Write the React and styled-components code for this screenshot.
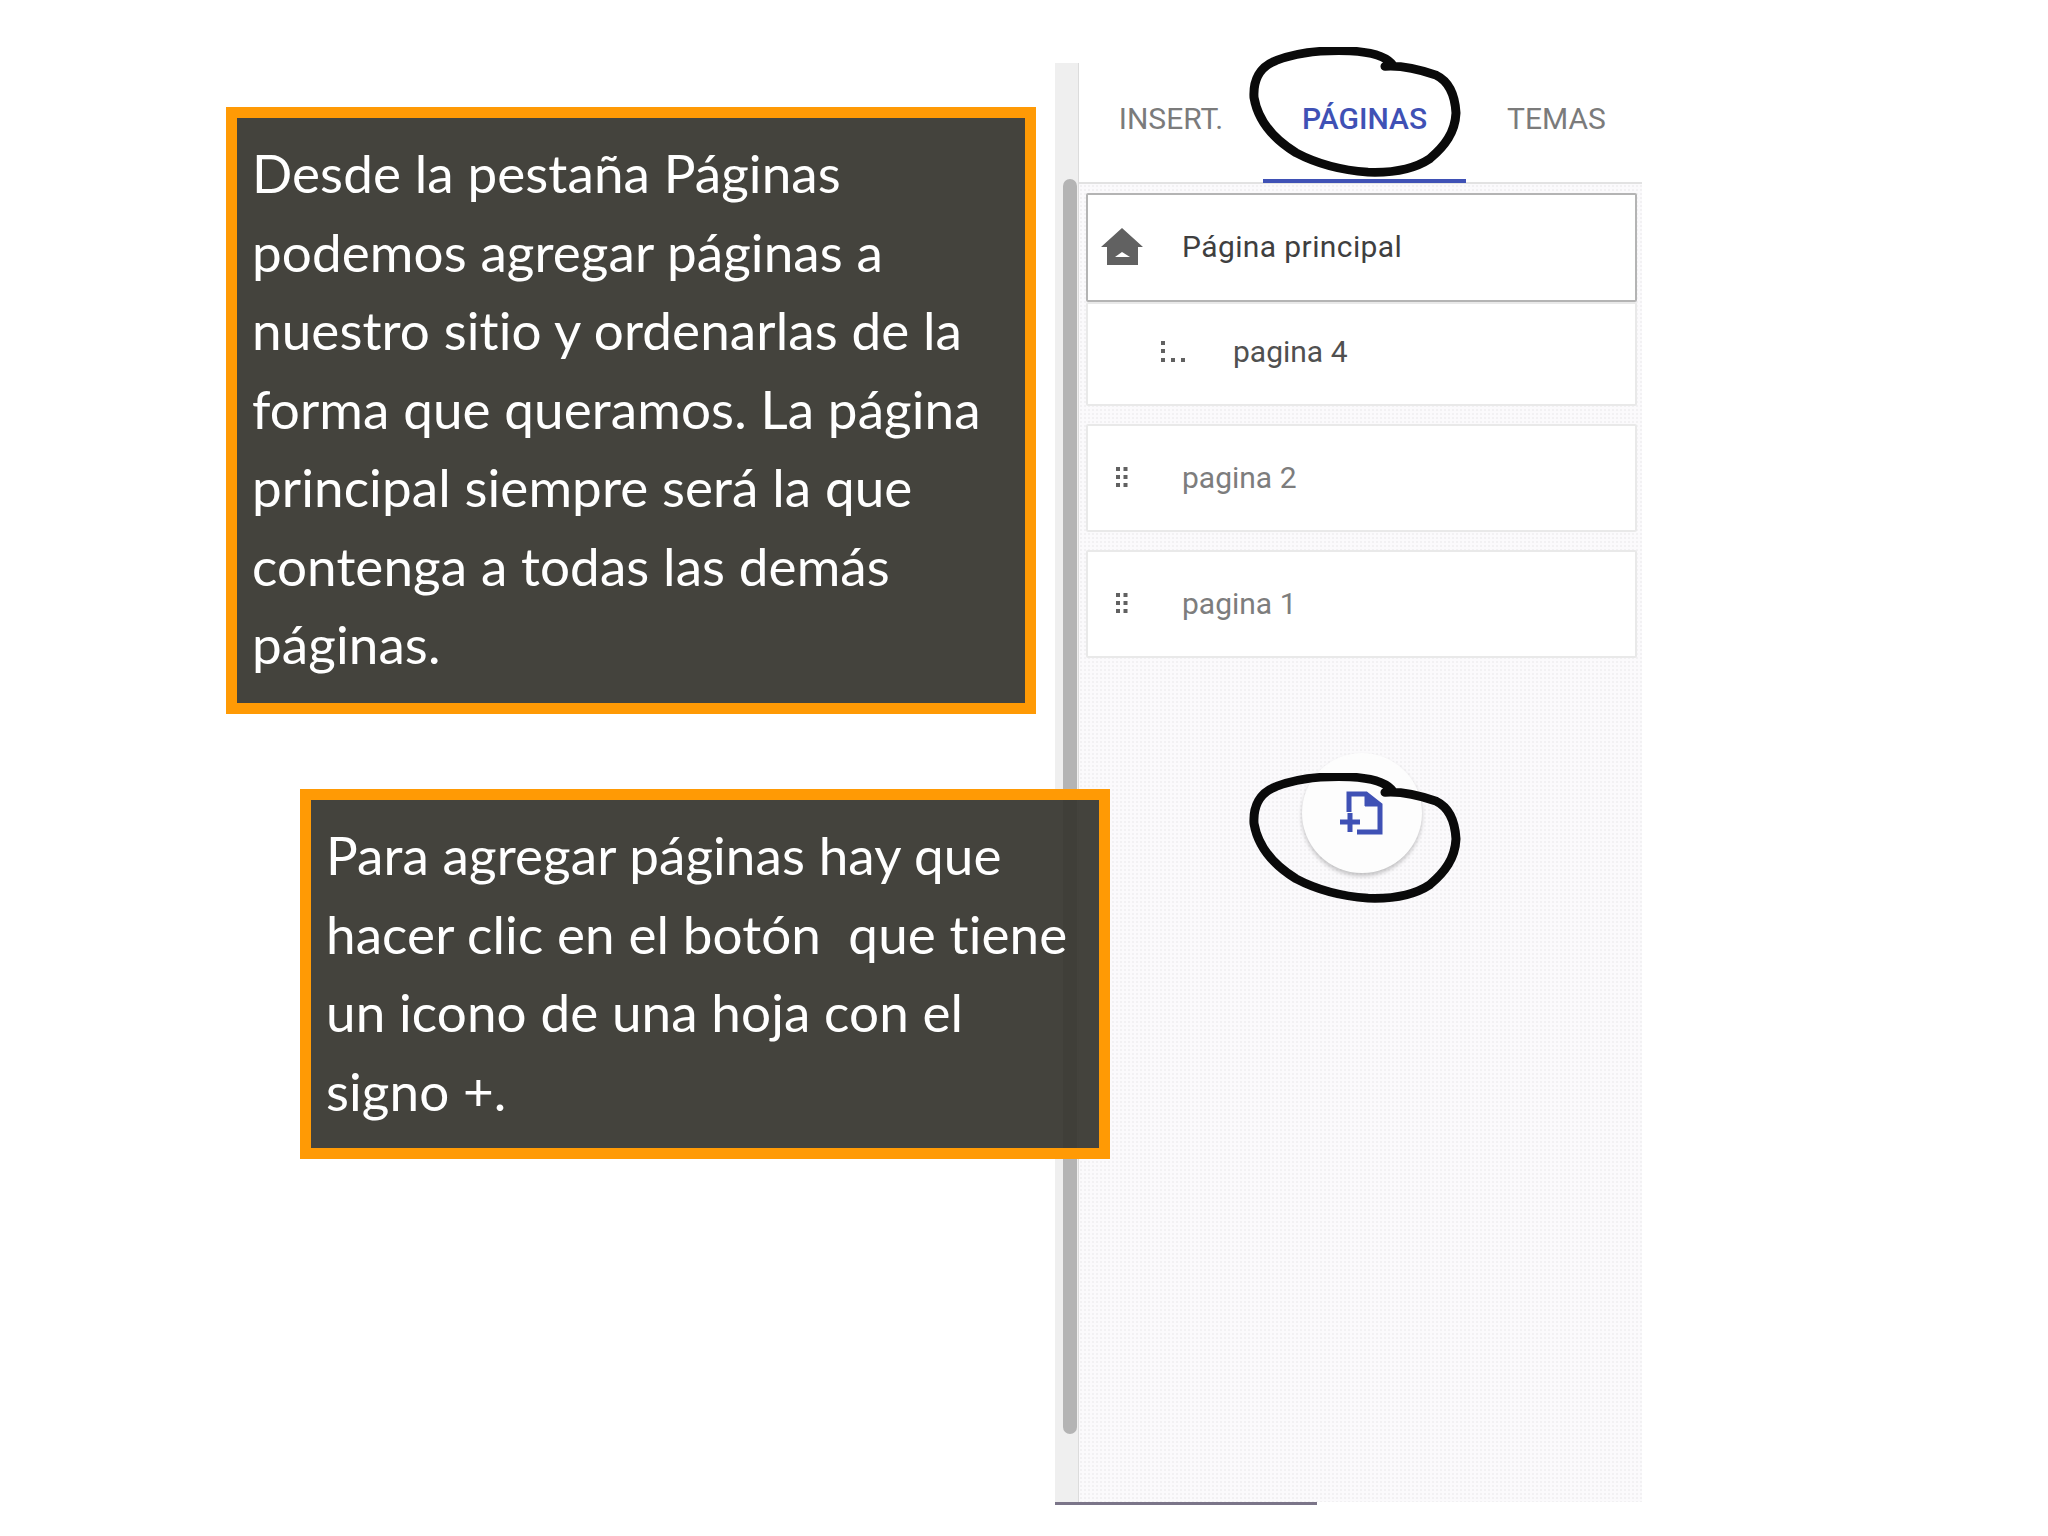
import React from "react";
import styled, { createGlobalStyle } from "styled-components";

const GlobalStyle = createGlobalStyle`
  html, body {
    margin: 0;
    padding: 0;
    background: #fff;
  }
`;

const Page = styled.div`
  position: relative;
  display: flex;
  width: 2048px;
  height: 1536px;
  overflow: hidden;
  background: #fff;
`;

const NotesColumn = styled.div`
  width: 1055px;
  flex: none;
  padding-top: 107px;
  box-sizing: border-box;
`;

const Note = styled.div`
  position: relative;
  z-index: 2;
  box-sizing: border-box;
  width: 810px;
  height: ${(p) => p.$height}px;
  margin-top: ${(p) => p.$top}px;
  margin-left: ${(p) => p.$left}px;
  padding: 16px 10px 0 15px;
  border: 11.5px solid #ff9a05;
  background: rgba(58, 57, 51, 0.95);
  color: #fff;
  font-family: Lato, "Liberation Sans", sans-serif;
  font-size: 53px;
  letter-spacing: 0.1px;
  line-height: 78.5px;
  white-space: pre;
`;

const PanelWrap = styled.div`
  width: 587px;
  flex: none;
  padding-top: 63px;
`;

const Panel = styled.div`
  display: flex;
  height: 1439px;
`;

const Rail = styled.div`
  width: 24px;
  flex: none;
  box-sizing: border-box;
  padding: 116px 1px 68px 8px;
  background: #efefef;
  border-right: 1px solid #dcdcdc;
`;

const Thumb = styled.div`
  height: 100%;
  border-radius: 7px;
  background: #b4b4b4;
`;

const Sidebar = styled.div`
  flex: 1;
  display: flex;
  flex-direction: column;
  min-width: 0;
`;

const Tabs = styled.div`
  display: flex;
  height: 121px;
  flex: none;
  box-sizing: border-box;
  background: #fff;
  border-bottom: 2px solid #e2e2e2;
`;

const Tab = styled.div`
  width: ${(p) => p.$width}px;
  flex: none;
  display: flex;
  align-items: center;
  justify-content: center;
  box-sizing: border-box;
  padding-bottom: 6px;
  padding-left: ${(p) => p.$nudge || 0}px;
  border-bottom: 4px solid ${(p) => (p.$active ? "#3f51b5" : "transparent")};
  margin-bottom: -1px;
  color: ${(p) => (p.$active ? "#3f51b5" : "#7b7b7b")};
  font-family: Roboto, sans-serif;
  font-size: 30px;
  font-weight: ${(p) => (p.$active ? 500 : 400)};
`;

const Content = styled.div`
  flex: 1;
  display: flex;
  flex-direction: column;
  padding: 9px 5px 0 7px;
  background-color: #fbfafc;
  background-image: radial-gradient(#f2f1f3 1px, transparent 1.2px);
  background-size: 4px 4px;
`;

const PageGroup = styled.div`
  display: flex;
  flex-direction: column;
  margin-bottom: 18px;
`;

const PageCard = styled.div`
  display: flex;
  align-items: center;
  box-sizing: border-box;
  height: ${(p) => p.$height}px;
  padding-left: ${(p) => p.$indent || 0}px;
  padding-bottom: ${(p) => p.$lift || 0}px;
  background: #fff;
  border: ${(p) => (p.$selected ? "2px solid #b4b4b4" : "2px solid #e9e9e9")};
  border-radius: 2px;
  color: ${(p) => p.$color};
  font-family: Roboto, sans-serif;
  font-size: 30px;
  letter-spacing: ${(p) => (p.$selected ? "0.4px" : "0")};
`;

const IconSlot = styled.div`
  width: 67px;
  margin-right: 27px;
  flex: none;
  display: flex;
  justify-content: center;
  align-items: center;
`;

const AddButton = styled.div`
  align-self: center;
  width: 120px;
  height: 120px;
  margin-top: 77px;
  display: flex;
  align-items: center;
  justify-content: center;
  border-radius: 50%;
  background: #fdfdfd;
  box-shadow: 0 3px 4px rgba(0, 0, 0, 0.22);
`;

const BottomLine = styled.div`
  width: 262px;
  height: 3px;
  background: #7b7589;
`;

const Scribble = styled.svg`
  position: absolute;
  z-index: 3;
  left: 1246px;
  top: ${(p) => p.$top}px;
  width: 216px;
  height: 130px;
`;

function HomeIcon() {
  return (
    <svg width="44" height="42" viewBox="0 0 44 42">
      <path d="M22 2 43 21H38V39H7V21H1Z" fill="#616161" />
      <path d="M15 31 22 26 30 31Z" fill="#fff" />
    </svg>
  );
}

function DragDots() {
  const dots = [];
  for (let row = 0; row < 3; row++) {
    for (let col = 0; col < 2; col++) {
      dots.push(<rect key={`${row}-${col}`} x={col * 7.5} y={row * 8} width="4" height="4" />);
    }
  }
  return (
    <svg width="12" height="20" viewBox="0 0 12 20" fill="#616161">
      {dots}
    </svg>
  );
}

function BrokenDots() {
  return (
    <svg width="24" height="21" viewBox="0 0 24 21" fill="#616161">
      <rect x="0" y="0" width="4" height="4" />
      <rect x="0" y="8" width="4" height="4" />
      <rect x="0" y="17" width="4" height="4" />
      <rect x="10" y="17" width="4" height="4" />
      <rect x="20" y="17" width="4" height="4" />
    </svg>
  );
}

function AddPageIcon() {
  return (
    <svg width="44" height="44" viewBox="1 1 44 44" fill="none" stroke="#3f51b5" strokeWidth="5">
      <path d="M10 22V4H27L41 15V42H18" />
      <path d="M26 3 41 16H26Z" fill="#3f51b5" strokeWidth="1" />
      <path d="M1 32H21M11 23V42" />
    </svg>
  );
}

function Circle({ top }) {
  return (
    <Scribble $top={top} viewBox="0 0 216 134" preserveAspectRatio="none">
      <path
        d="M139 20C152 19 170 22 190 29C204 36 209 50 210 68C209 88 199 102 184 115C168 126 148 130 122 129C95 127 72 121 50 109C28 95 12 76 8 52C7 34 14 20 30 14C52 5 78 3 104 4C122 5 140 8 147 19"
        fill="none"
        stroke="#0a0a0a"
        strokeWidth="9"
        strokeLinecap="round"
      />
    </Scribble>
  );
}

export default function App() {
  return (
    <Page>
      <GlobalStyle />
      <NotesColumn>
        <Note $height={607} $top={0} $left={226}>
          {`Desde la pestaña Páginas
podemos agregar páginas a
nuestro sitio y ordenarlas de la
forma que queramos. La página
principal siempre será la que
contenga a todas las demás
páginas.`}
        </Note>
        <Note $height={370} $top={75} $left={300}>
          {`Para agregar páginas hay que
hacer clic en el botón  que tiene
un icono de una hoja con el
signo +.`}
        </Note>
      </NotesColumn>
      <PanelWrap>
        <Panel>
          <Rail>
            <Thumb />
          </Rail>
          <Sidebar>
            <Tabs>
              <Tab $width={184}>INSERT.</Tab>
              <Tab $width={203} $active>
                PÁGINAS
              </Tab>
              <Tab $width={176} $nudge={5}>
                TEMAS
              </Tab>
            </Tabs>
            <Content>
              <PageGroup>
                <PageCard $height={109} $selected $color="#3f3f3f" $lift={2}>
                  <IconSlot>
                    <HomeIcon />
                  </IconSlot>
                  Página principal
                </PageCard>
                <PageCard $height={104} $indent={51} $color="#505050" $lift={5}>
                  <IconSlot>
                    <BrokenDots />
                  </IconSlot>
                  pagina 4
                </PageCard>
              </PageGroup>
              <PageGroup>
                <PageCard $height={108} $color="#7d7d7d" $lift={2}>
                  <IconSlot>
                    <DragDots />
                  </IconSlot>
                  pagina 2
                </PageCard>
              </PageGroup>
              <PageGroup>
                <PageCard $height={108} $color="#7d7d7d" $lift={2}>
                  <IconSlot>
                    <DragDots />
                  </IconSlot>
                  pagina 1
                </PageCard>
              </PageGroup>
              <AddButton>
                <AddPageIcon />
              </AddButton>
            </Content>
          </Sidebar>
        </Panel>
        <BottomLine />
      </PanelWrap>
      <Circle top={47} />
      <Circle top={773} />
    </Page>
  );
}
